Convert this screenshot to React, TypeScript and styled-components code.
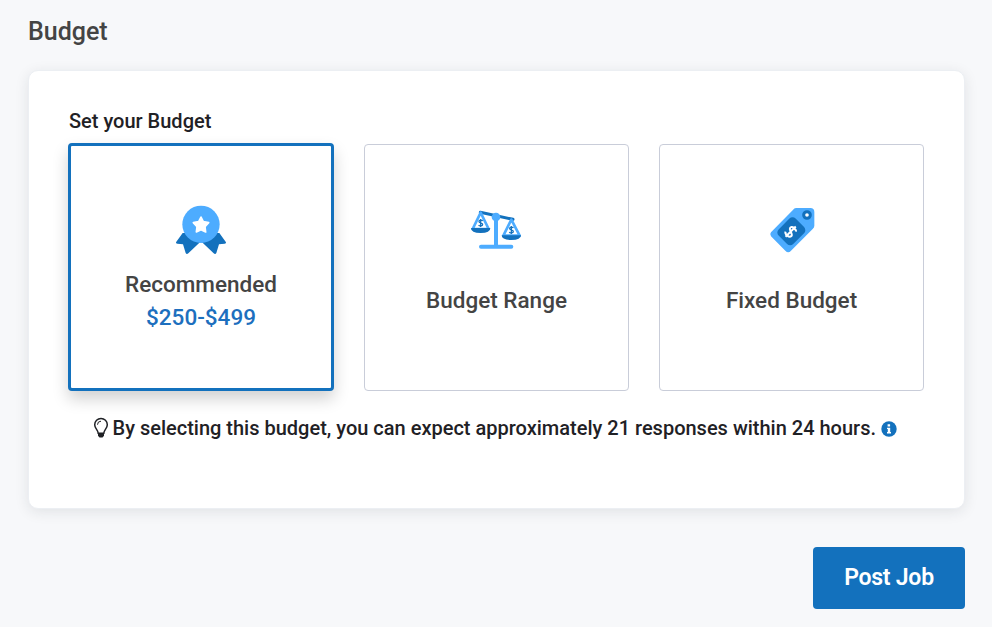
import React from "react";
import styled, { createGlobalStyle } from "styled-components";

const GlobalStyle = createGlobalStyle`
  * { box-sizing: border-box; }
  body {
    margin: 0;
    background: #f7f8fa;
    font-family: Roboto, sans-serif;
    font-weight: 500;
    color: #1f2125;
  }
`;

const Page = styled.main`
  width: 992px;
  height: 627px;
  padding: 14px 27px 0 28px;
  overflow: hidden;
`;

const Title = styled.h1`
  margin: 0 0 20px;
  font-size: 25px;
  line-height: 36px;
  font-weight: 500;
  color: #444;
`;

const Panel = styled.section`
  height: 439px;
  padding: 37px 40px 0;
  background: #fff;
  border: 1px solid #eceff3;
  border-radius: 10px;
  box-shadow: 0 3px 14px rgba(30, 40, 50, 0.1);
`;

const Label = styled.h2`
  margin: 0 0 9px;
  font-size: 20px;
  line-height: 27px;
  font-weight: 500;
`;

const Options = styled.div`
  display: grid;
  grid-template-columns: 266px 265px 265px;
  column-gap: 30px;
  margin-left: -1px;
`;

const Option = styled.button<{ $selected?: boolean }>`
  display: flex;
  flex-direction: column;
  align-items: center;
  height: ${(p) => (p.$selected ? 248 : 247)}px;
  margin: ${(p) => (p.$selected ? "-1px 0 0" : "0")};
  padding: ${(p) => (p.$selected ? 49 : 50)}px 0 0;
  background: #fff;
  border: ${(p) => (p.$selected ? "3px solid #1371bd" : "1px solid #c9cdd9")};
  border-radius: 4px;
  box-shadow: ${(p) => (p.$selected ? "0 8px 16px rgba(0, 0, 0, 0.18)" : "none")};
  font: 500 22.5px/33px Roboto, sans-serif;
  color: #444;
`;

const OptionName = styled.span<{ $single?: boolean }>`
  margin-top: ${(p) => (p.$single ? 19 : 3)}px;
`;

const Price = styled.span`
  color: #1d6fbe;
`;

const Hint = styled.p`
  display: flex;
  align-items: center;
  margin: 23px 0 0 23.5px;
  font-size: 20px;
  line-height: 28px;
  white-space: nowrap;
`;

const BulbSvg = styled.svg`
  margin-right: 4px;
`;

const InfoSvg = styled.svg`
  margin: 2px 0 0 5px;
`;

const Actions = styled.div`
  display: flex;
  justify-content: flex-end;
  margin-top: 38px;
`;

const PostButton = styled.button`
  width: 152px;
  height: 62px;
  padding: 0 0 2px;
  border: 0;
  border-radius: 4px;
  background: #1371bd;
  color: #fff;
  font: 600 23px Roboto, sans-serif;
  letter-spacing: -0.25px;
`;

const AwardIcon = () => (
  <svg width="72" height="70" viewBox="0 0 216 210">
    <path d="M53 114L33 142q-1 4 4 4l17 2 8 26q3 5 8 1l38-36 38 36q5 4 8-1l8-26 17-2q5 0 4-4l-20-28z" fill="#1371bd" />
    <circle cx="108" cy="88" r="56" fill="#4dacff" />
    <path d="M108 66l7 14 16 3-11 12 2 16-14-7-14 7 2-16-11-12 16-3z" fill="#fff" stroke="#fff" strokeWidth="5" strokeLinejoin="round" />
  </svg>
);

const dollar = "M7-7C5-11-6-11-6-5S7-1 7 5-5 12-7 7M0-14V14";

const ScalesIcon = () => (
  <svg width="72" height="70" viewBox="3 0 216 210">
    <path d="M61 52l98 21" stroke="#1371bd" strokeWidth="9" strokeLinecap="round" />
    <g fill="#fff" stroke="#4dacff" strokeWidth="8" strokeLinejoin="round">
      <path d="M62 53L38 102h48z" />
      <path d="M154 74l-24 48h49z" />
    </g>
    <path d="M33 99h58q0 15-29 15T33 99zM125 121h58q0 14-29 14t-29-14z" fill="#1371bd" />
    <path d="M108 68v86M63 155h91" stroke="#4dacff" strokeWidth="12" strokeLinecap="round" />
    <circle cx="108" cy="66" r="13" fill="#4dacff" />
    <g fill="none" stroke="#1371bd" strokeWidth="4.5">
      <path d={dollar} transform="translate(62 84) scale(.85)" />
      <path d={dollar} transform="translate(154 105) scale(.85)" />
    </g>
  </svg>
);

const TagIcon = () => (
  <svg width="72" height="70" viewBox="0 0 216 210">
    <path d="M120 39h43q12 0 12 12v41q0 5-5 10l-65 65q-8 9-17 0l-43-43q-5-6 0-12l65-66q5-7 10-7z" fill="#4dacff" />
    <rect x="70" y="78" width="72" height="62" rx="13" transform="rotate(-45 106 109)" fill="#1371bd" />
    <circle cx="153" cy="60" r="10" fill="#fff" stroke="#1371bd" strokeWidth="9" />
    <path d={dollar} transform="translate(104 110) rotate(45) scale(1.55)" fill="none" stroke="#fff" strokeWidth="3.8" />
  </svg>
);

const BulbIcon = () => (
  <BulbSvg width="16" height="22" viewBox="0 0 16 22" fill="none" stroke="#1f2125">
    <path d="M5.2 16.2C5.2 12.8 1.7 11.7 1.7 7.7a6.3 6.3 0 0112.6 0c0 4-3.5 5.1-3.5 8.5z" strokeWidth="1.5" />
    <path d="M4.5 7.7A3.5 3.5 0 018 4.2" strokeWidth="1" />
    <path d="M5 16.3h6v2.5L9.5 20.5h-3L5 18.8z" fill="#1f2125" stroke="none" />
  </BulbSvg>
);

const InfoIcon = () => (
  <InfoSvg width="16" height="16" viewBox="0 0 16 16">
    <circle cx="8" cy="8" r="7.7" fill="#1371bd" />
    <path d="M6.6 3.2h2.5v2.2H6.6zM6 6.7h3.2V11H10v1.4H6V11h.8V8H6z" fill="#fff" />
  </InfoSvg>
);

export default function App() {
  return (
    <>
      <GlobalStyle />
      <Page>
        <Title>Budget</Title>
        <Panel>
          <Label>Set your Budget</Label>
          <Options>
            <Option $selected>
              <AwardIcon />
              <OptionName>Recommended</OptionName>
              <Price>$250-$499</Price>
            </Option>
            <Option>
              <ScalesIcon />
              <OptionName $single>Budget Range</OptionName>
            </Option>
            <Option>
              <TagIcon />
              <OptionName $single>Fixed Budget</OptionName>
            </Option>
          </Options>
          <Hint>
            <BulbIcon />
            By selecting this budget, you can expect approximately 21 responses within 24 hours.
            <InfoIcon />
          </Hint>
        </Panel>
        <Actions>
          <PostButton>Post Job</PostButton>
        </Actions>
      </Page>
    </>
  );
}
